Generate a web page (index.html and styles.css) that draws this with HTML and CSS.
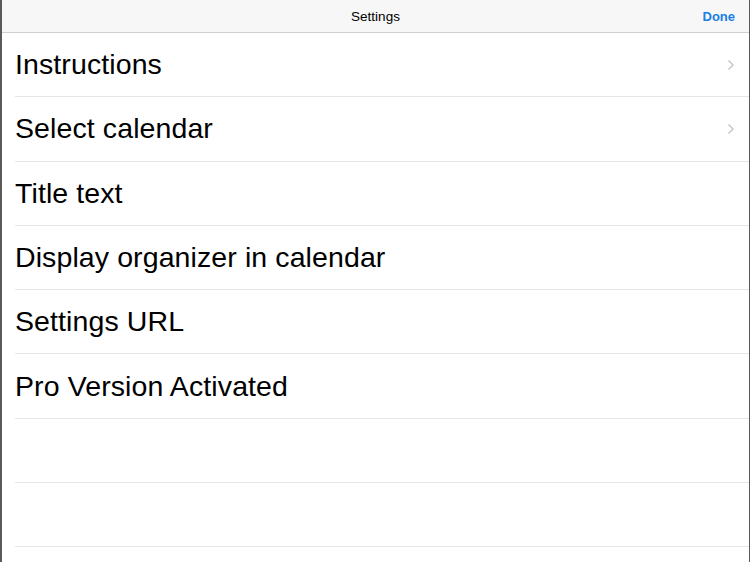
FILE: index.html
```html
<!DOCTYPE html>
<html>
<head>
<meta charset="utf-8">
<link rel="stylesheet" href="styles.css">
</head>
<body>
<div class="frame">
  <header class="navbar">
    <div class="nav-side"></div>
    <div class="nav-title">Settings</div>
    <div class="nav-side nav-right"><span class="done">Done</span></div>
  </header>
  <ul class="list">
    <li class="row"><span class="label">Instructions</span><svg class="chev" width="8" height="12" viewBox="0 0 8 12"><path d="M1.5 1.5 L6 6 L1.5 10.5" fill="none" stroke="#c7c7cc" stroke-width="1.5"/></svg></li>
    <li class="row"><span class="label">Select calendar</span><svg class="chev" width="8" height="12" viewBox="0 0 8 12"><path d="M1.5 1.5 L6 6 L1.5 10.5" fill="none" stroke="#c7c7cc" stroke-width="1.5"/></svg></li>
    <li class="row"><span class="label">Title text</span></li>
    <li class="row"><span class="label">Display organizer in calendar</span></li>
    <li class="row"><span class="label">Settings URL</span></li>
    <li class="row"><span class="label">Pro Version Activated</span></li>
    <li class="row"></li>
    <li class="row"></li>
  </ul>
</div>
</body>
</html>
```
FILE: styles.css
```css
html, body {
  margin: 0;
  padding: 0;
  background: #fff;
}
body {
  font-family: "Liberation Sans", Arial, sans-serif;
  color: #000;
}
.frame {
  width: 750px;
  height: 562px;
  box-sizing: border-box;
  border-left: 2px solid #5a5a5a;
  border-right: 1px solid #5a5a5a;
  overflow: hidden;
  background: #fff;
}
.navbar {
  height: 32px;
  background: #f7f7f7;
  border-bottom: 1px solid #cfcfd2;
  display: grid;
  grid-template-columns: 1fr auto 1fr;
  align-items: center;
  padding: 0 14px;
}
.nav-right {
  display: flex;
  justify-content: flex-end;
}
.nav-title {
  font-size: 13.5px;
  color: #000;
}
.done {
  font-size: 13px;
  font-weight: bold;
  color: #1a7ee6;
}
.list {
  list-style: none;
  margin: 0;
  padding: 0 0 0 13px;
}
.row {
  height: 63.29px;
  border-bottom: 1px solid #e6e6e8;
  display: flex;
  align-items: center;
  padding-right: 14px;
}
.label {
  flex: 1;
  font-size: 28.5px;
  letter-spacing: 0.1px;
}
.chev {
  display: block;
}
```
